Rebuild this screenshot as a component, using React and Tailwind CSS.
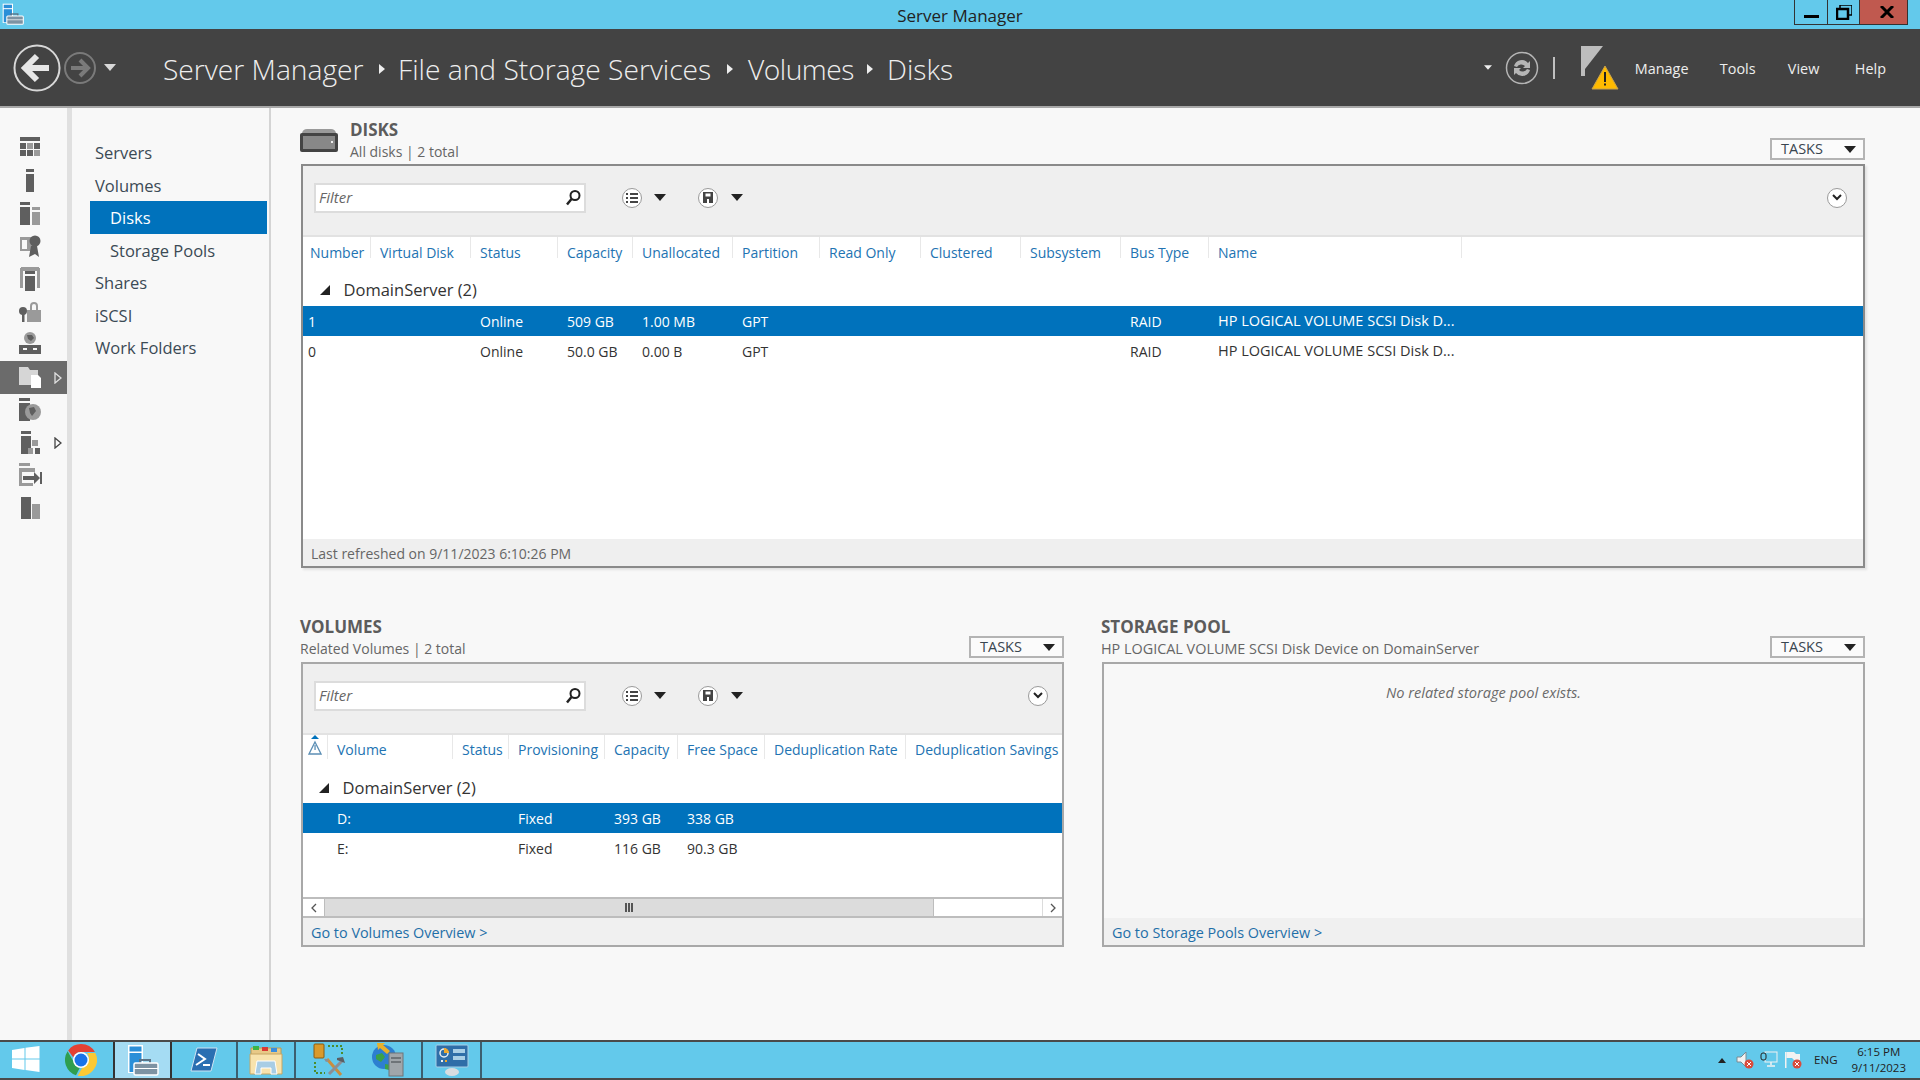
import { useState } from "react";

const disksCols = [
  ["Number", "Virtual Disk", "Status", "Capacity", "Unallocated", "Partition", "Read Only", "Clustered", "Subsystem", "Bus Type", "Name"],
];
const diskRows = [
  { sel: true, cells: ["1", "", "Online", "509 GB", "1.00 MB", "GPT", "", "", "", "RAID", "HP LOGICAL VOLUME SCSI Disk D..."] },
  { sel: false, cells: ["0", "", "Online", "50.0 GB", "0.00 B", "GPT", "", "", "", "RAID", "HP LOGICAL VOLUME SCSI Disk D..."] },
];
const volumeCols = ["", "Volume", "Status", "Provisioning", "Capacity", "Free Space", "Deduplication Rate", "Deduplication Savings"];
const volumeRows = [
  { sel: true, cells: ["", "D:", "", "Fixed", "393 GB", "338 GB", "", ""] },
  { sel: false, cells: ["", "E:", "", "Fixed", "116 GB", "90.3 GB", "", ""] },
];
const disksGrid = "grid grid-cols-[68px_100px_87px_75px_100px_87px_101px_100px_100px_88px_253px]";
const volumesGrid = "grid grid-cols-[25px_125px_56px_96px_73px_87px_141px_156px]";

const Caret = ({ className = "", color = "#222" }) => (
  <svg width="12" height="7" viewBox="0 0 12 7" className={className}>
    <path d="M0 0h12L6 7z" fill={color} />
  </svg>
);

const RailIcon = ({ i, light }) => {
  const d = light ? "#e6e6e6" : "#5f5f5f";
  const m = light ? "#ffffff" : "#9a9a9a";
  const icons = [
    <g key="0" fill={d}><rect x="3" y="2" width="20" height="4" /><rect x="3" y="8" width="6" height="6" /><rect x="10" y="8" width="6" height="6" fill={m} /><rect x="17" y="8" width="6" height="6" /><rect x="3" y="15" width="6" height="6" /><rect x="10" y="15" width="6" height="6" /><rect x="17" y="15" width="6" height="6" fill={m} /></g>,
    <g key="1" fill={d}><rect x="9" y="1" width="8" height="3" /><rect x="9" y="6" width="8" height="18" /></g>,
    <g key="2" fill={d}><rect x="3" y="1" width="10" height="3" /><rect x="3" y="6" width="10" height="18" /><rect x="15" y="6" width="8" height="3" fill={m} /><rect x="15" y="11" width="8" height="13" fill={m} /></g>,
    <g key="3" fill={d}><rect x="3" y="4" width="15" height="14" fill={m} /><rect x="5" y="7" width="5" height="9" fill="#f8f8f8" /><circle cx="18" cy="8" r="5.5" /><path d="M14 13l-2 11 6-3 4 3-2-11z" /></g>,
    <g key="4" fill={d}><rect x="4" y="1" width="18" height="4" fill={m} /><rect x="3" y="2" width="3" height="20" fill={m} /><rect x="20" y="2" width="3" height="20" fill={m} /><rect x="8" y="5" width="10" height="3" /><rect x="8" y="10" width="10" height="15" /></g>,
    <g key="5" fill={d}><path d="M10 11h14v12H10z" fill={m} /><path d="M13 11V7a4 4 0 018 0v4h-2V7a2 2 0 00-4 0v4z" fill={m} /><circle cx="6" cy="12" r="4" /><rect x="5" y="14" width="2.5" height="9" /></g>,
    <g key="6" fill={d}><circle cx="13" cy="7" r="6" fill={m} /><path d="M10 4h5l2 3-3 3-3-2z" /><rect x="2" y="14" width="22" height="9" /><rect x="6" y="17" width="4" height="2" fill="#f8f8f8" /><rect x="16" y="17" width="4" height="2" fill="#f8f8f8" /></g>,
    <g key="7"><path d="M2 3h9l2 3h8v15H2z" fill="#d6d6d6" /><path d="M14 11h7l3 3v10H14z" fill="#ffffff" /></g>,
    <g key="8" fill={d}><rect x="2" y="1" width="11" height="3" /><rect x="2" y="6" width="11" height="18" /><circle cx="16" cy="15" r="8" fill={m} /><path d="M12 11l5-1 2 4-4 5-2-3z" /></g>,
    <g key="9" fill={d}><rect x="4" y="1" width="10" height="3" /><rect x="4" y="6" width="10" height="18" /><rect x="15" y="10" width="6" height="6" fill={m} /><rect x="11" y="18" width="5" height="6" fill={m} /><rect x="18" y="18" width="5" height="6" /></g>,
    <g key="10" fill={m}><rect x="2" y="1" width="11" height="3" /><rect x="2" y="6" width="16" height="4" /><rect x="2" y="10" width="3" height="14" /><rect x="2" y="21" width="14" height="3" /><path d="M6 14h11v-4l6 6-6 6v-4H6z" fill={d} /><rect x="23" y="10" width="2" height="12" fill={d} /></g>,
    <g key="11"><rect x="4" y="2" width="10" height="22" fill={d} /><rect x="15" y="9" width="8" height="15" fill={m} /></g>,
  ];
  return (
    <svg width="26" height="26" viewBox="0 0 26 26">
      {icons[i]}
    </svg>
  );
};

const ServerManagerIcon = ({ size = 32 }) => (
  <svg width={size} height={size} viewBox="0 0 32 32">
    <rect x="1" y="1" width="15" height="28" fill="#ffffff" />
    <rect x="2.5" y="2.5" width="12" height="5" fill="#2a8fd8" />
    <rect x="2.5" y="9" width="12" height="19" fill="#2a8fd8" />
    <rect x="13" y="16" width="10" height="5" fill="none" stroke="#5a7386" strokeWidth="2" />
    <rect x="7" y="19" width="24" height="12" rx="1.5" fill="#7d93a3" stroke="#ffffff" strokeWidth="1.5" />
    <rect x="7" y="24" width="24" height="1" fill="#ffffff" />
  </svg>
);

const ChromeIcon = () => (
  <svg width="32" height="32" viewBox="0 0 32 32">
    <path d="M16 0a16 16 0 0113.9 8H16a8 8 0 00-7.6 5.6L3.2 6.4A16 16 0 0116 0z" fill="#e34133" />
    <path d="M2.6 7.2l6 10.6a8 8 0 006.2 6L11 31.2A16 16 0 012.6 7.2z" fill="#2f9e4f" />
    <path d="M30.3 9a16 16 0 01-17.6 22.7l6-10.4A8 8 0 0022 9z" fill="#fcc934" />
    <circle cx="16" cy="16" r="8" fill="#ffffff" />
    <circle cx="16" cy="16" r="6.5" fill="#1a73e8" />
  </svg>
);

const WindowsLogo = () => (
  <svg width="28" height="26" viewBox="0 0 28 26" className="mb-[2px]">
    <path d="M0 4l12.5-2v10.5H0zM13.5 1.8L27.5 0v12.5h-14zM0 13.5h12.5V24L0 22zM13.5 13.5h14V26l-14-2z" fill="#ffffff" />
  </svg>
);

const PowerShellIcon = () => (
  <svg width="28" height="26" viewBox="0 0 28 26">
    <path d="M7 1h20l-6 23H1z" fill="#2a6fb2" stroke="#cfe3f2" strokeWidth="1" />
    <path d="M8 7l7 5-9 6" fill="none" stroke="#ffffff" strokeWidth="2" />
    <path d="M13 18h7" stroke="#ffffff" strokeWidth="2" />
  </svg>
);

const FolderIcon = () => (
  <svg width="34" height="32" viewBox="0 0 34 32">
    <path d="M2 4h30v22H2z" fill="#e8c987" stroke="#b89a58" />
    <rect x="4" y="2" width="6" height="4" fill="#3bb54a" />
    <rect x="13" y="3" width="6" height="4" fill="#d83a35" />
    <rect x="22" y="4" width="6" height="4" fill="#3a8dde" />
    <path d="M1 10h32v20H1z" fill="#f8e3ad" stroke="#c6a665" />
    <path d="M8 17h18l2 13h-6v-6H12v6H6z" fill="#a8cde5" stroke="#ffffff" />
  </svg>
);

const ToolsIcon = () => (
  <svg width="34" height="34" viewBox="0 0 34 34">
    <rect x="1" y="1" width="10" height="14" rx="1" fill="#d99a2b" stroke="#8a5a10" />
    <path d="M15 3h14v10M29 15v2M2 19v11h10" fill="none" stroke="#4c8c2c" strokeWidth="2" strokeDasharray="2 2" />
    <path d="M14 16l14 16" stroke="#c98d3f" strokeWidth="3" />
    <path d="M30 17L16 31" stroke="#8b8f94" strokeWidth="3" />
    <path d="M24 17l8 3-2-6-6 1z" fill="#5b5f64" />
    <path d="M11 16a4 4 0 015 2l-3 1z" fill="#8b8f94" />
  </svg>
);

const GlobeServerIcon = () => (
  <svg width="34" height="34" viewBox="0 0 34 34">
    <circle cx="13" cy="14" r="12" fill="#2d7fd0" />
    <path d="M5 12l6-2 3 4-4 5-5-3zM14 21l6 1-2 5-4-1z" fill="#3aa24a" />
    <rect x="18" y="10" width="14" height="23" fill="#a0a6aa" stroke="#6e7478" />
    <rect x="20" y="14" width="10" height="2" fill="#6e7478" />
    <rect x="20" y="18" width="10" height="2" fill="#6e7478" />
    <path d="M6 0h8l-2 2 7 6-3 3-7-6-2 2z" fill="#e8b12a" />
  </svg>
);

const MonitorIcon = () => (
  <svg width="34" height="32" viewBox="0 0 34 32">
    <rect x="1" y="1" width="32" height="22" rx="1" fill="#2f6ea8" stroke="#a9cfe6" />
    <circle cx="9" cy="9" r="4" fill="none" stroke="#e8eef3" strokeWidth="1.5" />
    <path d="M9 9V4a5 5 0 015 5z" fill="#f0a92c" />
    <rect x="18" y="5" width="12" height="4" fill="#a9cfe6" />
    <rect x="18" y="12" width="12" height="4" fill="#a9cfe6" />
    <rect x="6" y="16" width="2" height="2" fill="#e8eef3" />
    <rect x="10" y="16" width="2" height="2" fill="#f0a92c" />
    <ellipse cx="17" cy="28" rx="7" ry="4" fill="#d8dde0" />
  </svg>
);

const Circle = ({ size = 20, children }) => (
  <div
    className="flex items-center justify-center rounded-full border border-[#9a9a9a] bg-white"
    style={{ width: size, height: size }}
  >
    {children}
  </div>
);

const ListGlyph = () => (
  <svg width="12" height="10" viewBox="0 0 12 10">
    <path d="M0 0h2v2H0zM4 0h8v2H4zM0 4h2v2H0zM4 4h8v2H4zM0 8h2v2H0zM4 8h8v2H4z" fill="#444" />
  </svg>
);

const SaveGlyph = () => (
  <svg width="10" height="11" viewBox="0 0 10 11">
    <path d="M0 0h10v11H0z" fill="#444" />
    <rect x="2.5" y="1.5" width="5" height="3" fill="#fff" />
    <rect x="4" y="7" width="2" height="4" fill="#fff" />
  </svg>
);

const ChevronGlyph = () => (
  <svg width="10" height="7" viewBox="0 0 10 7">
    <path d="M1 1l4 4 4-4" fill="none" stroke="#222" strokeWidth="2" />
  </svg>
);

const Toolbar = ({ chevronRight }) => (
  <div className="flex h-[71px] shrink-0 items-center border-b-2 border-[#e2e2e2] bg-[#efefef] pb-[6px] pl-[11px]">
    <div className="flex h-[30px] w-[272px] items-center justify-between border-2 border-[#dcdcdc] bg-white pl-[3px] pr-[2px]">
      <span className="text-[15px] italic text-[#666666]">Filter</span>
      <svg width="18" height="18" viewBox="0 0 18 18">
        <circle cx="11" cy="6.5" r="4.5" fill="none" stroke="#222" strokeWidth="2" />
        <path d="M7.5 10L3 15.5" stroke="#222" strokeWidth="2.5" />
      </svg>
    </div>
    <div className="ml-[36px]">
      <Circle><ListGlyph /></Circle>
    </div>
    <Caret className="ml-[12px]" />
    <div className="ml-[32px]">
      <Circle><SaveGlyph /></Circle>
    </div>
    <Caret className="ml-[13px]" />
    <div className={chevronRight}>
      <Circle><ChevronGlyph /></Circle>
    </div>
  </div>
);

const TasksButton = () => (
  <div className="flex h-[22px] w-[95px] items-center justify-between border-2 border-[#b4b4b4] bg-[#fbfbfb] pl-[9px] pr-[7px]">
    <span className="text-[14.5px] leading-none text-[#3a4650]">TASKS</span>
    <Caret />
  </div>
);

const GroupRow = ({ pl, gap, top }) => (
  <div className="flex h-[36px] shrink-0 items-center" style={{ paddingLeft: pl, paddingTop: top }}>
    <svg width="10" height="10" viewBox="0 0 10 10">
      <path d="M10 0v10H0z" fill="#222" />
    </svg>
    <span className="text-[16.5px] text-[#333333]" style={{ marginLeft: gap }}>DomainServer (2)</span>
  </div>
);

const Row = ({ grid, row, cellPad }) => (
  <div className={`${grid} h-[30px] shrink-0 items-center text-[14px] ${row.sel ? "bg-[#0072bc] text-white" : "text-[#333333]"}`}>
    {row.cells.map((c, i) => (
      <div key={i} className={`${cellPad} whitespace-nowrap first:pl-[5px] last:text-[14.5px]`}>{c}</div>
    ))}
  </div>
);

const Footer = ({ children }) => (
  <div className="flex h-[27px] shrink-0 items-center bg-[#f0f0f0] pl-[8px] pt-[2px] text-[14.4px] text-[#1f6fa8]">{children}</div>
);

const BreadcrumbArrow = ({ className }) => (
  <svg width="6" height="10" viewBox="0 0 6 10" className={className}>
    <path d="M0 0l6 5-6 5z" fill="#eee" />
  </svg>
);

const App = () => {
  const [activeNav] = useState("Disks");
  const nav = [
    ["Servers", false],
    ["Volumes", false],
    ["Disks", true],
    ["Storage Pools", true],
    ["Shares", false],
    ["iSCSI", false],
    ["Work Folders", false],
  ];

  return (
    <div className="flex h-[1080px] w-[1920px] flex-col overflow-hidden bg-[#f8f8f8] font-['Open_Sans','Noto_Sans',sans-serif]">
      {/* Title bar */}
      <div className="relative flex h-[29px] shrink-0 items-start justify-between bg-[#63c9eb]">
        <div className="ml-[2px] mt-[3px]"><ServerManagerIcon size={22} /></div>
        <div className="absolute left-0 right-0 top-[5px] text-center text-[17px] leading-[22px] text-[#222222]">Server Manager</div>
        <div className="mr-[12px] flex h-[25px] border-x border-b border-[#333333]">
          <div className="flex w-[33px] items-end justify-center border-r border-[#333333] pb-[6px]">
            <div className="h-[3px] w-[15px] bg-black" />
          </div>
          <div className="flex w-[32px] items-center justify-center border-r border-[#333333]">
            <svg width="16" height="15" viewBox="0 0 16 15">
              <path d="M4 3V0h12v10h-3" fill="none" stroke="#000" strokeWidth="1.5" />
              <rect x="1" y="4" width="11" height="10" fill="none" stroke="#000" strokeWidth="2.5" />
            </svg>
          </div>
          <div className="flex w-[47px] items-center justify-center bg-[#c0594f] pl-[6px]">
            <svg width="14" height="12" viewBox="0 0 14 12">
              <path d="M1 0l12 12M13 0L1 12" stroke="#000" strokeWidth="3" />
            </svg>
          </div>
        </div>
      </div>

      {/* Header */}
      <div className="flex h-[79px] shrink-0 items-center border-b-2 border-[#a8a8a8] bg-[#434343] pl-[13px] text-[#eeeeee]">
        <svg width="48" height="48" viewBox="0 0 48 48">
          <circle cx="24" cy="24" r="22.5" fill="none" stroke="#d8d8d8" strokeWidth="2" />
          <path d="M36 24H15" fill="none" stroke="#e6e6e6" strokeWidth="6" />
          <path d="M24 12L12 24l12 12" fill="none" stroke="#e6e6e6" strokeWidth="6" />
        </svg>
        <svg width="32" height="32" viewBox="0 0 32 32" className="ml-[3px]">
          <circle cx="16" cy="16" r="15" fill="none" stroke="#7a7a7a" strokeWidth="2" />
          <path d="M7 16h15" fill="none" stroke="#7a7a7a" strokeWidth="4" />
          <path d="M16 8l8 8-8 8" fill="none" stroke="#7a7a7a" strokeWidth="4" />
        </svg>
        <Caret className="ml-[8px]" color="#d8d8d8" />
        <div className="ml-[47px] flex items-center pt-[3px] text-[28.2px] font-light leading-none">
          <span className="w-[201px] whitespace-nowrap">Server Manager</span>
          <BreadcrumbArrow className="ml-[15px] mr-[13px]" />
          <span className="w-[313px] whitespace-nowrap">File and Storage Services</span>
          <BreadcrumbArrow className="ml-[16px] mr-[15px]" />
          <span className="w-[105px] whitespace-nowrap tracking-[-0.5px]">Volumes</span>
          <BreadcrumbArrow className="ml-[14px] mr-[14px]" />
          <span className="whitespace-nowrap">Disks</span>
        </div>
        <div className="ml-auto mr-[34px] flex items-center">
          <Caret className="h-[5px] w-[8px]" color="#eeeeee" />
          <svg width="34" height="34" viewBox="0 0 34 34" className="ml-[13px]">
            <circle cx="17" cy="17" r="15.5" fill="none" stroke="#b5b5b5" strokeWidth="1.5" />
            <path d="M9 15a8 8 0 0114-3l2-2v7h-7l2-2a5 5 0 00-8 1zM25 19a8 8 0 01-14 3l-2 2v-7h7l-2 2a5 5 0 008-1z" fill="#b5b5b5" />
          </svg>
          <div className="ml-[14px] h-[22px] w-[2px] bg-[#c0c0c0]" />
          <div className="relative ml-[26px] h-[46px] w-[38px]">
            <svg width="38" height="46" viewBox="0 0 38 46" className="absolute left-0 top-0">
              <rect x="0" y="1" width="4" height="30" fill="#bdbdbd" />
              <path d="M4 1h18L4 24z" fill="#bdbdbd" />
              <path d="M24 21l13 23H11z" fill="#ffbb00" stroke="#c9a24a" strokeWidth="1" />
              <rect x="23" y="27" width="2" height="10" fill="#222" />
              <rect x="23" y="38.5" width="2" height="2" fill="#222" />
            </svg>
          </div>
          <div className="ml-[16px] flex pt-[3px] text-[14.4px] leading-none">
            <span className="w-[85px]">Manage</span>
            <span className="w-[68px]">Tools</span>
            <span className="w-[67px]">View</span>
            <span>Help</span>
          </div>
        </div>
      </div>

      {/* Body */}
      <div className="flex min-h-0 flex-1">
        <div className="flex w-[67px] shrink-0 flex-col pt-[24px]">
          {Array.from({ length: 12 }).map((_, i) => (
            <div key={i} className={`relative flex h-[32.7px] items-center pl-[17px] ${i === 7 ? "bg-[#6b6b6b]" : ""}`}>
              <RailIcon i={i} light={i === 7} />
              {(i === 7 || i === 9) && (
                <svg width="8" height="12" viewBox="0 0 8 12" className="absolute left-[54px] top-[11px]">
                  <path d="M1 1l6 5-6 5z" fill="none" stroke={i === 7 ? "#e0e0e0" : "#444"} strokeWidth="1.3" />
                </svg>
              )}
            </div>
          ))}
        </div>
        <div className="w-[5px] shrink-0 bg-[#e0e0e0]" />
        <div className="w-[199px] shrink-0 border-r-2 border-[#d4d4d4] pl-[18px] pr-[2px] pt-[28px]">
          {nav.map(([label, sub]) => (
            <div
              key={label}
              className={`flex h-[32.6px] items-center pt-[2px] text-[16.5px] ${sub ? "pl-[20px]" : "pl-[5px]"} ${label === activeNav ? "bg-[#0072bc] text-white" : "text-[#3b4a55]"}`}
            >
              {label}
            </div>
          ))}
        </div>

        <div className="flex min-w-0 flex-1 flex-col pl-[30px] pr-[55px]">
          {/* Disks */}
          <div className="flex h-[56px] shrink-0 items-end justify-between pb-[4px]">
            <div className="flex items-end">
              <svg width="40" height="26" viewBox="0 0 40 26" className="mb-[7px] ml-[-2px]">
                <path d="M3 6Q4 2 8 2h24q4 0 5 4z" fill="#9a9a9a" />
                <rect x="1" y="6" width="38" height="19" rx="2" fill="#444444" />
                <rect x="4" y="9" width="32" height="13" fill="#888888" />
                <rect x="32" y="14" width="2" height="2" fill="#eeeeee" />
              </svg>
              <div className="mb-[-2px] ml-[11px] leading-none">
                <div className="text-[17px] font-bold leading-[22px] text-[#5c5c5c]">DISKS</div>
                <div className="text-[14px] leading-[21px] text-[#666666]">All disks | 2 total</div>
              </div>
            </div>
            <TasksButton />
          </div>
          <div className="flex h-[404px] shrink-0 flex-col border-2 border-[#8a8a8a] bg-white shadow-[2px_2px_2px_#e2e2e2]">
            <Toolbar chevronRight="ml-auto mr-[16px]" />
            <div className={`${disksGrid} h-[33px] shrink-0`}>
              {disksCols[0].map((h) => (
                <div key={h} className="h-[21px] whitespace-nowrap border-r border-[#e8e8e8] pl-[9px] pt-[6px] text-[14px] leading-[20px] text-[#2273b2] first:pl-[7px]">{h}</div>
              ))}
            </div>
            <GroupRow pl={17} gap={13.5} top={4} />
            {diskRows.map((r) => (
              <Row key={r.cells[0]} grid={disksGrid} row={r} cellPad="pl-[9px]" />
            ))}
            <div className="flex-1" />
            <div className="flex h-[27px] shrink-0 items-center bg-[#efefef] pl-[8px] pt-[1px] text-[14px] text-[#666666]">Last refreshed on 9/11/2023 6:10:26 PM</div>
          </div>

          {/* Volumes + Storage Pool */}
          <div className="mt-[49px] flex gap-[38px]">
            <div className="w-[763px] shrink-0">
              <div className="flex h-[45px] items-end justify-between pb-[4px]">
                <div className="mb-[-1px] ml-[-1px]">
                  <div className="text-[17px] font-bold leading-[24px] text-[#5c5c5c]">VOLUMES</div>
                  <div className="text-[14px] leading-[20px] text-[#666666]">Related Volumes | 2 total</div>
                </div>
                <TasksButton />
              </div>
              <div className="flex h-[285px] flex-col border-2 border-[#a8a8a8] bg-white">
                <Toolbar chevronRight="ml-[285px]" />
                <div className={`${volumesGrid} h-[32px] shrink-0`}>
                  {volumeCols.map((h, i) => (
                    <div key={i} className="relative h-[24px] whitespace-nowrap border-r border-[#e8e8e8] pl-[9px] pt-[5px] text-[14px] leading-[20px] text-[#2273b2] last:border-r-0">
                      {i === 0 ? (
                        <svg width="14" height="22" viewBox="0 0 14 22" className="absolute left-[5px] top-0">
                          <path d="M3 4l4-4 4 4z" fill="#0072bc" />
                          <path d="M7 7l6 12H1z" fill="none" stroke="#5c8fb5" strokeWidth="1.3" />
                          <rect x="6.4" y="10" width="1.3" height="5" fill="#5c8fb5" />
                        </svg>
                      ) : h}
                    </div>
                  ))}
                </div>
                <GroupRow pl={16} gap={13.5} top={6} />
                {volumeRows.map((r) => (
                  <Row key={r.cells[1]} grid={volumesGrid} row={r} cellPad="pl-[9px]" />
                ))}
                <div className="flex-1" />
                <div className="flex h-[21px] shrink-0 items-center border-y-2 border-[#bdbdbd] bg-white">
                  <div className="flex h-full w-[21px] items-center justify-center">
                    <svg width="6" height="10" viewBox="0 0 6 10"><path d="M5 1L1 5l4 4" fill="none" stroke="#555" strokeWidth="1.3" /></svg>
                  </div>
                  <div className="flex h-full w-[610px] items-center justify-center gap-[1px] border-x border-[#bdbdbd] bg-[#dcdcdc]">
                    <div className="h-[9px] w-[2px] bg-[#555555]" />
                    <div className="h-[9px] w-[2px] bg-[#555555]" />
                    <div className="h-[9px] w-[2px] bg-[#555555]" />
                  </div>
                  <div className="flex-1" />
                  <div className="flex h-full w-[20px] items-center justify-center border-l border-[#dcdcdc]">
                    <svg width="6" height="10" viewBox="0 0 6 10"><path d="M1 1l4 4-4 4" fill="none" stroke="#555" strokeWidth="1.3" /></svg>
                  </div>
                </div>
                <Footer>Go to Volumes Overview &gt;</Footer>
              </div>
            </div>

            <div className="min-w-0 flex-1">
              <div className="flex h-[45px] items-end justify-between pb-[4px]">
                <div className="mb-[-1px] ml-[-1px]">
                  <div className="text-[17px] font-bold leading-[24px] text-[#5c5c5c]">STORAGE POOL</div>
                  <div className="text-[14.4px] leading-[20px] text-[#666666]">HP LOGICAL VOLUME SCSI Disk Device on DomainServer</div>
                </div>
                <TasksButton />
              </div>
              <div className="flex h-[285px] flex-col border-2 border-[#a8a8a8] bg-[#f8f8f8]">
                <div className="flex-1 pt-[18px] text-center text-[14.6px] italic text-[#6a6a6a]">No related storage pool exists.</div>
                <Footer>Go to Storage Pools Overview &gt;</Footer>
              </div>
            </div>
          </div>
        </div>
      </div>

      {/* Taskbar */}
      <div className="flex h-[40px] shrink-0 items-stretch border-y-2 border-[#4a4a4a] bg-[#63c9eb]">
        <div className="flex w-[113px] shrink-0 items-center pl-[12px]">
          <WindowsLogo />
          <div className="ml-[25px]"><ChromeIcon /></div>
        </div>
        <div className="flex w-[59px] shrink-0 items-center justify-center border-x-2 border-[#333333] bg-[#a5dcf3]"><ServerManagerIcon /></div>
        <div className="flex w-[66px] shrink-0 items-center justify-center border-r-2 border-[#3c5f70]"><PowerShellIcon /></div>
        <div className="flex w-[58px] shrink-0 items-center justify-center border-r-2 border-[#3c5f70]"><FolderIcon /></div>
        <div className="flex w-[127px] shrink-0 items-center justify-between border-r-2 border-[#3c5f70] pl-[17px] pr-[16px]">
          <ToolsIcon />
          <GlobeServerIcon />
        </div>
        <div className="flex w-[59px] shrink-0 items-center justify-center border-r-2 border-[#3c5f70]"><MonitorIcon /></div>
        <div className="ml-auto flex items-center pr-[14px]">
          <svg width="8" height="5" viewBox="0 0 8 5"><path d="M0 5l4-5 4 5z" fill="#222" /></svg>
          <svg width="18" height="18" viewBox="0 0 18 18" className="ml-[10px]">
            <path d="M1 6h4l5-5v15l-5-5H1z" fill="#f2f2f2" stroke="#7a8a92" />
            <circle cx="13" cy="13" r="4.5" fill="#d94b3c" />
            <path d="M11 11l4 4M15 11l-4 4" stroke="#fff" />
          </svg>
          <svg width="18" height="18" viewBox="0 0 18 18" className="ml-[6px]">
            <rect x="5" y="1" width="12" height="10" fill="none" stroke="#f2f2f2" />
            <rect x="1" y="2" width="5" height="7" rx="2" fill="#63c9eb" stroke="#222" />
            <path d="M11 11v3M7 15h8" stroke="#f2f2f2" strokeWidth="1.5" />
          </svg>
          <svg width="18" height="18" viewBox="0 0 18 18" className="ml-[6px]">
            <rect x="1" y="1" width="1.5" height="16" fill="#f2f2f2" />
            <path d="M2.5 1H10l2 2h4v6h-6L8 7H2.5z" fill="#f2f2f2" />
            <circle cx="13" cy="13" r="4.5" fill="#d94b3c" />
            <path d="M11 11l4 4M15 11l-4 4" stroke="#fff" />
          </svg>
          <span className="ml-[12px] text-[11.5px] text-[#222222]">ENG</span>
          <div className="ml-[14px] text-center text-[11.5px] leading-[16px] text-[#222222]">
            <div>6:15 PM</div>
            <div>9/11/2023</div>
          </div>
        </div>
      </div>
    </div>
  );
};

export default App;
